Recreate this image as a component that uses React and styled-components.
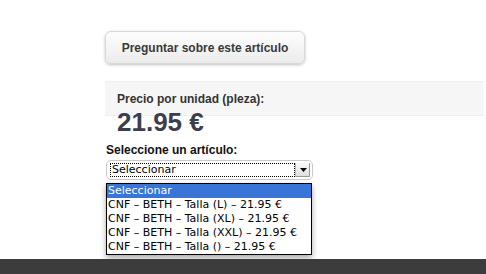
import styled, { createGlobalStyle } from 'styled-components';

const Global = createGlobalStyle`
	html, body {
		margin: 0;
		padding: 0;
		background: #fff;
		font-family: "Liberation Sans", Arial, sans-serif;
	}
`;

const Page = styled.div`
	width: 486px;
	height: 274px;
	display: flex;
	flex-direction: column;
	overflow: hidden;
`;

const Content = styled.div`
	flex: 1;
	padding: 31px 2px 0 105px;
	display: flex;
	flex-direction: column;
	align-items: flex-start;
`;

const AskButton = styled.button`
	width: 200px;
	height: 33px;
	border: 1px solid #d8d8d8;
	border-radius: 6px;
	background: linear-gradient(#fdfdfd, #ececec);
	box-shadow: 0 1px 3px rgba(0, 0, 0, 0.25);
	font-family: "Liberation Sans", Arial, sans-serif;
	font-weight: bold;
	font-size: 12px;
	color: #3a3a3a;
	padding: 0;
`;

const PriceBox = styled.div`
	align-self: stretch;
	margin-top: 17px;
	height: 35px;
	background: #f6f6f6;
	border-top: 1px solid #efefef;
	border-bottom: 1px solid #efefef;
	padding: 10px 0 0 12px;
	box-sizing: border-box;
	overflow: visible;
`;

const PriceLabel = styled.div`
	font-weight: bold;
	font-size: 12px;
	color: #333;
	line-height: 14px;
`;

const Price = styled.div`
	font-weight: bold;
	font-size: 26px;
	color: #3d3d4c;
	line-height: 30px;
	margin-top: 1px;
`;

const SelectLabel = styled.div`
	margin-top: 27px;
	margin-left: 1px;
	font-weight: bold;
	font-size: 12px;
	color: #111;
	line-height: 14px;
`;

const SelectBox = styled.div`
	margin-top: 3px;
	margin-left: 1px;
	width: 207px;
	height: 20px;
	box-sizing: border-box;
	border: 1px solid #c9c9c9;
	border-radius: 5px;
	background: #fff;
	display: flex;
	align-items: stretch;
	padding: 2px 2px 2px 3px;
`;

const SelectValue = styled.div`
	flex: 1;
	border: 1px dotted #000;
	font-family: "DejaVu Sans", sans-serif;
	font-size: 11px;
	line-height: 12px;
	padding-left: 1px;
	color: #000;
`;

const Arrow = styled.div`
	width: 14px;
	background: linear-gradient(#fafafa, #dcdcdc);
	border-left: 1px solid #bbb;
	display: flex;
	align-items: center;
	justify-content: center;
	box-shadow: inset -1px -1px 0 #999;
`;

const List = styled.ul`
	list-style: none;
	margin: 3px 0 0 1px;
	padding: 0;
	width: 206px;
	border: 1px solid #000;
	box-sizing: border-box;
	box-shadow: 0 3px 6px rgba(0, 0, 0, 0.35);
	background: #fff;
`;

const Item = styled.li`
	font-family: "DejaVu Sans", sans-serif;
	font-size: 11px;
	height: 14px;
	line-height: 14px;
	padding-left: 1px;
	white-space: nowrap;
	background: ${(p) => (p.$active ? '#3875d7' : 'transparent')};
	color: ${(p) => (p.$active ? '#fff' : '#000')};
`;

const Footer = styled.div`
	height: 15px;
	background: #3c3c3c;
`;

const options = [
	'CNF – BETH – Talla (L) – 21.95 €',
	'CNF – BETH – Talla (XL) – 21.95 €',
	'CNF – BETH – Talla (XXL) – 21.95 €',
	'CNF – BETH – Talla () – 21.95 €',
];

export default function App() {
	return (
		<Page>
			<Global />
			<Content>
				<AskButton>Preguntar sobre este artículo</AskButton>
				<PriceBox>
					<PriceLabel>Precio por unidad (pleza):</PriceLabel>
					<Price>21.95 €</Price>
				</PriceBox>
				<SelectLabel>Seleccione un artículo:</SelectLabel>
				<SelectBox>
					<SelectValue>Seleccionar</SelectValue>
					<Arrow>
						<svg width="7" height="4" viewBox="0 0 7 4">
							<path d="M0 0h7L3.5 4z" fill="#000" />
						</svg>
					</Arrow>
				</SelectBox>
				<List>
					<Item $active>Seleccionar</Item>
					{options.map((o) => (
						<Item key={o}>{o}</Item>
					))}
				</List>
			</Content>
			<Footer />
		</Page>
	);
}
